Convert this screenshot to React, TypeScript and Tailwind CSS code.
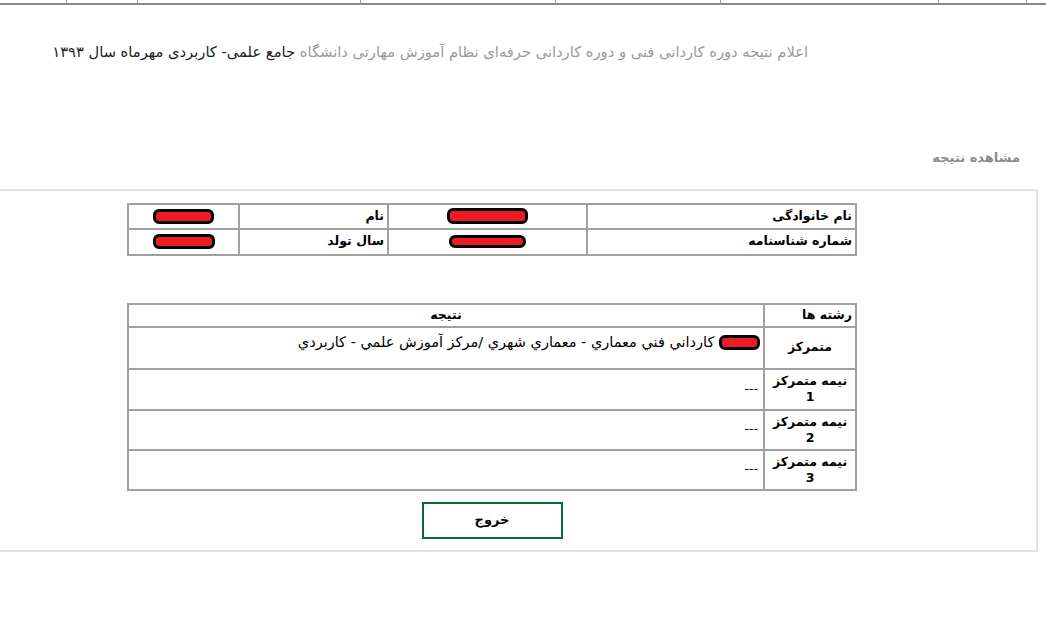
import React from "react";

const font = { fontFamily: '"DejaVu Sans", "Noto Sans", sans-serif' };

function Redact({ w, h }: { w: string; h: string }) {
  return <span className={`inline-block align-middle ${w} ${h} bg-[#ed1c24] border-[3px] border-black rounded-[6px]`} />;
}

const ticks = [66, 137, 360, 555, 720, 938, 1026];

export default function App() {
  return (
    <div className="min-h-[632px] w-[1046px] bg-white overflow-hidden" style={font}>
      {/* top strip */}
      <div className="relative h-[5px] border-b-[2px] border-[#8a8a8a]">
        {ticks.map((x) => (
          <span key={x} className="absolute top-0 h-[3px] w-px bg-[#9a9a9a]" style={{ left: x }} />
        ))}
      </div>

      <div dir="rtl" className="mt-[37px] pr-[238px] text-[14.7px] leading-[20px] text-[#9a9a9a]">
        اعلام نتیجه دوره کاردانی فنی و دوره کاردانی حرفه‌ای نظام آموزش مهارتی دانشگاه{" "}
        <span className="text-[#222]">جامع علمی- کاربردی مهرماه سال ۱۳۹۳</span>
      </div>

      <div dir="rtl" className="mt-[86px] pr-[26px] text-[13px] font-bold text-[#8c8c8c]">
        مشاهده نتیجه
      </div>

      <div className="mt-[21px] ml-[-2px] mr-[8px] h-[363px] border-2 border-[#e3e3e3] pt-[12px]">
        <table dir="rtl" className="ml-[127px] w-[730px] border-collapse text-[12.5px] font-bold text-black">
          <tbody>
            <tr className="h-[25px]">
              <td className="w-[269px] border-2 border-[#a0a0a0] px-[3px] text-right">نام خانوادگی</td>
              <td className="w-[199px] border-2 border-[#a0a0a0] text-center"><Redact w="w-[81px]" h="h-[16px]" /></td>
              <td className="w-[149px] border-2 border-[#a0a0a0] px-[3px] text-right">نام</td>
              <td className="border-2 border-[#a0a0a0] text-center"><Redact w="w-[61px]" h="h-[15px]" /></td>
            </tr>
            <tr className="h-[26px]">
              <td className="border-2 border-[#a0a0a0] px-[3px] text-right">شماره شناسنامه</td>
              <td className="border-2 border-[#a0a0a0] text-center"><Redact w="w-[77px]" h="h-[13px]" /></td>
              <td className="border-2 border-[#a0a0a0] px-[3px] text-right">سال تولد</td>
              <td className="border-2 border-[#a0a0a0] text-center"><Redact w="w-[62px]" h="h-[15px]" /></td>
            </tr>
          </tbody>
        </table>

        <table dir="rtl" className="ml-[127px] mt-[47px] w-[730px] border-collapse text-[12.5px] text-black">
          <tbody>
            <tr className="h-[23px] font-bold">
              <td className="w-[92px] border-2 border-[#a0a0a0] px-[3px] text-right">رشته ها</td>
              <td className="border-2 border-[#a0a0a0] text-center">نتیجه</td>
            </tr>
            <tr className="h-[42px]">
              <td className="border-2 border-[#a0a0a0] text-center font-bold">متمرکز</td>
              <td className="border-2 border-[#a0a0a0] px-[3px] pt-[4px] align-top text-right text-[14.5px]">
                <Redact w="w-[41px]" h="h-[15px]" /> کارداني فني معماري - معماري شهري /مركز آموزش علمي - كاربردي
              </td>
            </tr>
            {[1, 2, 3].map((n) => (
              <tr key={n} className={n === 1 ? "h-[41px]" : "h-[40px]"}>
                <td className="border-2 border-[#a0a0a0] px-[3px] text-center font-bold leading-[16px]">
                  نیمه متمرکز
                  <br />
                  {n}
                </td>
                <td className="border-2 border-[#a0a0a0] px-[5px] text-right">---</td>
              </tr>
            ))}
          </tbody>
        </table>

        <div className="ml-[127px] w-[730px] mt-[11px] flex justify-center">
          <button className="h-[37px] w-[141px] border-2 border-[#0b6a2f] bg-white text-[13px] font-bold text-black">
            خروج
          </button>
        </div>
      </div>
    </div>
  );
}
